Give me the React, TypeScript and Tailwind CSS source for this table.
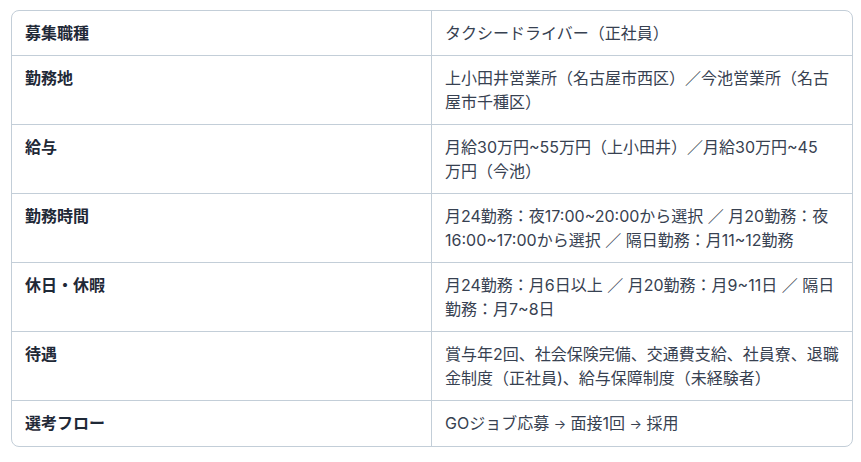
import type { ReactNode } from 'react'

const Arrow = () => <span className="text-[13px] leading-6">→</span>

const rows: { label: string; value: ReactNode }[] = [
  { label: '募集職種', value: 'タクシードライバー（正社員）' },
  {
    label: '勤務地',
    value: '上小田井営業所（名古屋市西区）／今池営業所（名古屋市千種区）',
  },
  {
    label: '給与',
    value: (
      <>
        月給30万円~55万円（上小田井）／月給30万円~45
        <br />
        万円（今池）
      </>
    ),
  },
  {
    label: '勤務時間',
    value: '月24勤務：夜17:00~20:00から選択 ／ 月20勤務：夜16:00~17:00から選択 ／ 隔日勤務：月11~12勤務',
  },
  {
    label: '休日・休暇',
    value: '月24勤務：月6日以上 ／ 月20勤務：月9~11日 ／ 隔日勤務：月7~8日',
  },
  {
    label: '待遇',
    value: '賞与年2回、社会保険完備、交通費支給、社員寮、退職金制度（正社員)、給与保障制度（未経験者）',
  },
  {
    label: '選考フロー',
    value: (
      <>
        GOジョブ応募 <Arrow /> 面接1回 <Arrow /> 採用
      </>
    ),
  },
]

export default function App() {
  return (
    <div className="bg-white min-h-screen pt-[10px] pl-[11px] font-['Inter','Noto_Sans_CJK_JP',sans-serif]">
      <div className="w-[842px] border border-[#c3ced8] rounded-lg overflow-hidden">
        {rows.map((row, i) => (
          <div
            key={row.label}
            className={`grid grid-cols-[420px_1fr] ${i > 0 ? 'border-t border-[#c3ced8]' : ''}`}
          >
            <div className="border-r border-[#c3ced8] px-[13px] py-2.5 text-base leading-6 font-semibold text-[#1f2937]">
              {row.label}
            </div>
            <div className="px-[13px] py-2.5 text-base leading-6 text-[#374151]">
              {row.value}
            </div>
          </div>
        ))}
      </div>
    </div>
  )
}
